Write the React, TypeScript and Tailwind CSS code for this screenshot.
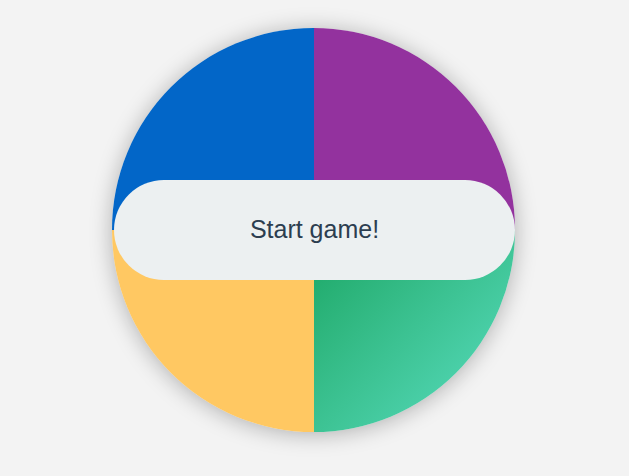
export default function App() {
  return (
    <main className="min-h-screen w-full bg-[#f3f3f3] flex justify-center pt-[28px] pr-[2px]" style={{ fontFamily: '"Liberation Sans", Arial, sans-serif' }}>
      <div className="relative w-[403px] h-[404px] rounded-full shadow-[0_2px_22px_rgba(0,0,0,0.28)]">
        <div className="grid grid-cols-2 grid-rows-2 w-full h-full rounded-full overflow-hidden">
          <div className="bg-[#0266c8]" />
          <div className="bg-[#93329e]" />
          <div className="bg-[#ffc862]" />
          <div className="bg-gradient-to-br from-[#18a663] to-[#5be0c4]" />
        </div>
        <button className="absolute left-[2px] right-0 top-[152px] h-[100px] rounded-full bg-[#ecf0f1] text-[#2c3e50] text-[25px] flex items-center justify-center">
          Start game!
        </button>
      </div>
    </main>
  );
}
